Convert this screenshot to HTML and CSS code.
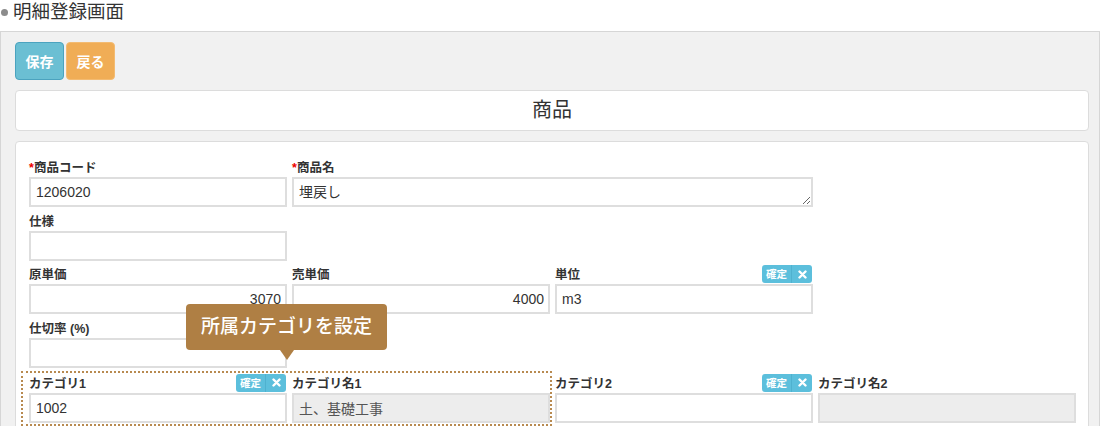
FILE: index.html
```html
<!DOCTYPE html>
<html lang="ja">
<head>
    <meta charset="UTF-8">
    <title>明細登録画面</title>
    <link rel="stylesheet" href="styles.css">
</head>
<body>

<h1 class="page-title"><span class="dot"></span>明細登録画面</h1>

<div class="screen">
    <!-- toolbar -->
    <div class="toolbar">
        <button class="btn btn-save">保存</button>
        <button class="btn btn-back">戻る</button>
    </div>

    <div class="panel-head">商品</div>

    <div class="panel-form">
        <div class="form-row">
            <div class="field">
                <div class="label-line"><label><span class="req">*</span>商品コード</label></div>
                <input class="input" type="text" value="1206020">
            </div>
            <div class="field span-2">
                <div class="label-line"><label><span class="req">*</span>商品名</label></div>
                <textarea class="input area">埋戻し</textarea>
            </div>
        </div>

        <div class="form-row">
            <div class="field">
                <div class="label-line"><label>仕様</label></div>
                <input class="input" type="text" value="">
            </div>
        </div>

        <div class="form-row">
            <div class="field">
                <div class="label-line"><label>原単価</label></div>
                <input class="input num" type="text" value="3070">
            </div>
            <div class="field">
                <div class="label-line"><label>売単価</label></div>
                <input class="input num" type="text" value="4000">
            </div>
            <div class="field">
                <div class="label-line">
                    <label>単位</label>
                    <span class="confirm"><span class="confirm-text">確定</span><span class="confirm-x"><svg width="9" height="9" viewBox="0 0 9 9"><path d="M1.5 1.5L7.5 7.5M7.5 1.5L1.5 7.5" stroke="#fff" stroke-width="2.4" stroke-linecap="round"/></svg></span></span>
                </div>
                <input class="input" type="text" value="m3">
            </div>
        </div>

        <div class="form-row">
            <div class="field">
                <div class="label-line"><label>仕切率 (%)</label></div>
                <input class="input" type="text" value="">
            </div>
        </div>

        <div class="form-row category-row">
            <!-- annotation: highlighted category fields -->
            <div class="highlight"></div>
            <div class="hint">所属カテゴリを設定</div>

            <div class="field">
                <div class="label-line">
                    <label>カテゴリ1</label>
                    <span class="confirm"><span class="confirm-text">確定</span><span class="confirm-x"><svg width="9" height="9" viewBox="0 0 9 9"><path d="M1.5 1.5L7.5 7.5M7.5 1.5L1.5 7.5" stroke="#fff" stroke-width="2.4" stroke-linecap="round"/></svg></span></span>
                </div>
                <input class="input" type="text" value="1002">
            </div>
            <div class="field">
                <div class="label-line"><label>カテゴリ名1</label></div>
                <input class="input readonly" type="text" value="土、基礎工事" readonly>
            </div>
            <div class="field">
                <div class="label-line">
                    <label>カテゴリ2</label>
                    <span class="confirm"><span class="confirm-text">確定</span><span class="confirm-x"><svg width="9" height="9" viewBox="0 0 9 9"><path d="M1.5 1.5L7.5 7.5M7.5 1.5L1.5 7.5" stroke="#fff" stroke-width="2.4" stroke-linecap="round"/></svg></span></span>
                </div>
                <input class="input" type="text" value="">
            </div>
            <div class="field">
                <div class="label-line"><label>カテゴリ名2</label></div>
                <input class="input readonly" type="text" value="" readonly>
            </div>
        </div>
    </div>
</div>

</body>
</html>
```

FILE: styles.css
```css
body {
    margin: 0;
    font-family: 'Liberation Sans', 'Noto Sans CJK JP', sans-serif;
    color: #333;
    background-color: #fff;
    overflow: hidden;
}
.page-title {
    margin: 0 0 7px 0;
    font-size: 18.5px;
    font-weight: normal;
    line-height: 24px;
    display: flex;
    align-items: center;
}
.page-title .dot {
    width: 7px;
    height: 7px;
    border-radius: 50%;
    background-color: #8c8c8c;
    margin: 1px 5px 0 1px;
}
/* grey outer area */
.screen {
    background-color: #f1f1f1;
    border: 1px solid #d6d6d6;
    padding: 10px 10px 10px 14px;
}
.toolbar {
    display: flex;
    gap: 2px;
    margin-bottom: 10px;
}
.btn {
    min-width: 49px;
    height: 38px;
    padding: 0 9px;
    border-radius: 4px;
    font-family: inherit;
    font-size: 14px;
    font-weight: bold;
    color: #fff;
    border: 1px solid;
}
.btn-save {
    background-color: #6bbfd3;
    border-color: #4ba3bf;
}
.btn-back {
    background-color: #f0ad56;
    border-color: #f3bb72;
}
.panel-head {
    background-color: #fff;
    border: 1px solid #dcdcdc;
    border-radius: 4px;
    height: 39px;
    line-height: 39px;
    text-align: center;
    font-size: 20px;
    margin-bottom: 10px;
}
.panel-form {
    background-color: #fff;
    border: 1px solid #dcdcdc;
    border-radius: 4px;
    padding: 17px 13px 3px 13px;
}
.form-row {
    display: grid;
    grid-template-columns: repeat(4, 258px);
    column-gap: 5px;
    margin-bottom: 5.5px;
}
.span-2 {
    grid-column: span 2;
}
.label-line {
    height: 18px;
    display: flex;
    justify-content: space-between;
    align-items: flex-end;
}
.label-line label {
    font-size: 12.5px;
    font-weight: bold;
    line-height: 18px;
    color: #333;
}
.req {
    color: #e00;
}
.input {
    display: block;
    box-sizing: border-box;
    width: 100%;
    height: 30px;
    margin: 0;
    border: 2px solid #dedede;
    padding: 0 5px;
    font-family: inherit;
    font-size: 14px;
    color: #333;
    background-color: #fff;
}
.area {
    resize: vertical;
    padding-top: 5px;
    line-height: 16px;
}
.num {
    text-align: right;
    padding-right: 4px;
}
.readonly {
    background-color: #ededed;
    color: #555;
}
/* 確定 x badge */
.confirm {
    display: flex;
    height: 18px;
    background-color: #5cbfdc;
    border-radius: 3px;
    color: #fff;
    margin-bottom: 1px;
    margin-right: 1px;
}
.confirm-text {
    font-size: 10.5px;
    font-weight: bold;
    line-height: 18px;
    padding: 0 4px;
    border-right: 1px solid #4fb1cf;
}
.confirm-x {
    width: 20px;
    display: flex;
    align-items: center;
    justify-content: center;
}
/* annotation overlay */
.category-row {
    position: relative;
    margin-top: 7px;
}
.highlight {
    position: absolute;
    left: -8px;
    top: -4px;
    width: 531px;
    height: 55px;
    box-sizing: border-box;
    border: 2px dotted #b88a50;
    pointer-events: none;
}
.hint {
    position: absolute;
    left: 157px;
    top: -71px;
    width: 201px;
    height: 46px;
    box-sizing: border-box;
    background-color: #af7f44;
    border-radius: 4px;
    color: #fff;
    font-size: 19px;
    font-weight: 500;
    line-height: 46px;
    text-align: center;
    z-index: 2;
}
.hint::after {
    content: "";
    position: absolute;
    left: 94px;
    top: 46px;
    border-left: 7px solid transparent;
    border-right: 7px solid transparent;
    border-top: 10px solid #af7f44;
}
```
